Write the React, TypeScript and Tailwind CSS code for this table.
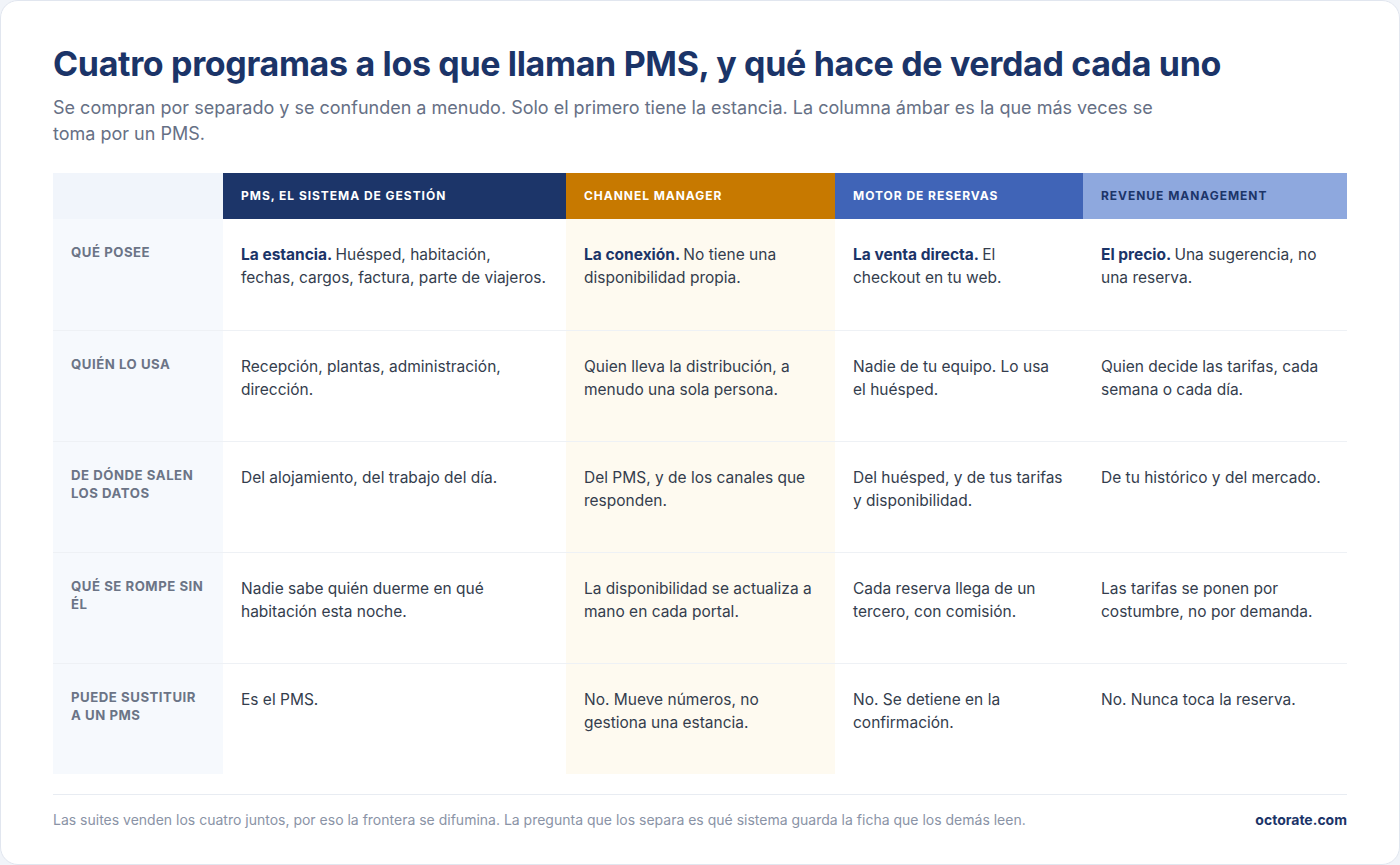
const columns = [
  { title: 'PMS, el sistema de gestión', head: 'bg-[#1c3569] text-white', body: 'bg-white' },
  { title: 'Channel manager', head: 'bg-[#c77900] text-white', body: 'bg-[#fefaf0]' },
  { title: 'Motor de reservas', head: 'bg-[#4064b7] text-white', body: 'bg-white' },
  { title: 'Revenue management', head: 'bg-[#8ea8de] text-[#1c3569]', body: 'bg-white' },
];

type Cell = { lead?: string; text: string };

const rows: { label: string; cells: Cell[] }[] = [
  {
    label: 'Qué posee',
    cells: [
      { lead: 'La estancia.', text: 'Huésped, habitación, fechas, cargos, factura, parte de viajeros.' },
      { lead: 'La conexión.', text: 'No tiene una disponibilidad propia.' },
      { lead: 'La venta directa.', text: 'El checkout en tu web.' },
      { lead: 'El precio.', text: 'Una sugerencia, no una reserva.' },
    ],
  },
  {
    label: 'Quién lo usa',
    cells: [
      { text: 'Recepción, plantas, administración, dirección.' },
      { text: 'Quien lleva la distribución, a menudo una sola persona.' },
      { text: 'Nadie de tu equipo. Lo usa el huésped.' },
      { text: 'Quien decide las tarifas, cada semana o cada día.' },
    ],
  },
  {
    label: 'De dónde salen los datos',
    cells: [
      { text: 'Del alojamiento, del trabajo del día.' },
      { text: 'Del PMS, y de los canales que responden.' },
      { text: 'Del huésped, y de tus tarifas y disponibilidad.' },
      { text: 'De tu histórico y del mercado.' },
    ],
  },
  {
    label: 'Qué se rompe sin él',
    cells: [
      { text: 'Nadie sabe quién duerme en qué habitación esta noche.' },
      { text: 'La disponibilidad se actualiza a mano en cada portal.' },
      { text: 'Cada reserva llega de un tercero, con comisión.' },
      { text: 'Las tarifas se ponen por costumbre, no por demanda.' },
    ],
  },
  {
    label: 'Puede sustituir a un PMS',
    cells: [
      { text: 'Es el PMS.' },
      { text: 'No. Mueve números, no gestiona una estancia.' },
      { text: 'No. Se detiene en la confirmación.' },
      { text: 'No. Nunca toca la reserva.' },
    ],
  },
];

export default function App() {
  return (
    <div className="bg-[#f1f4f9] font-['Inter','Noto_Sans',sans-serif]">
      <div className="h-[865px] w-[1400px] rounded-[18px] border border-[#e1e6ef] bg-white px-[52px] pt-[42px]">
        <h1 className="text-[34px] font-bold leading-[41px] tracking-[-0.01em] text-[#1b3468]">
          Cuatro programas a los que llaman PMS, y qué hace de verdad cada uno
        </h1>
        <p className="mt-[11px] max-w-[1130px] text-[18px] leading-[26px] text-[#667085]">
          Se compran por separado y se confunden a menudo. Solo el primero tiene la estancia. La columna ámbar es la que más veces se toma por un PMS.
        </p>

        <div className="mt-[26px] grid w-[1294px] grid-cols-[170px_343px_269px_248px_264px]">
          <div className="h-[46px] bg-[#f1f5fb]" />
          {columns.map((c) => (
            <div
              key={c.title}
              className={`flex h-[46px] items-center px-[18px] text-[12px] font-bold uppercase tracking-[0.08em] ${c.head}`}
            >
              {c.title}
            </div>
          ))}

          {rows.map((r, ri) => (
            <div key={r.label} className="contents">
              <div
                className={`h-[111px] bg-[#f6f9fd] px-[18px] pt-[24px] text-[13.2px] font-bold uppercase leading-[18px] tracking-[0.04em] text-[#6b7486] ${
                  ri > 0 ? 'border-t border-[#eef1f5]' : ''
                }`}
              >
                {r.label}
              </div>
              {r.cells.map((cell, ci) => (
                <div
                  key={ci}
                  className={`h-[111px] px-[18px] pt-[24px] text-[15.5px] leading-[23px] text-[#343d4d] ${columns[ci].body} ${
                    ri > 0 ? 'border-t border-[#eef1f5]' : ''
                  }`}
                >
                  {cell.lead && <span className="font-bold text-[#1b3468]">{cell.lead} </span>}
                  {cell.text}
                </div>
              ))}
            </div>
          ))}
        </div>

        <div className="mt-[20px] flex w-[1294px] items-center justify-between border-t border-[#e8ecf2] pt-[15px]">
          <p className="text-[14px] leading-[20px] text-[#8a93a6]">
            Las suites venden los cuatro juntos, por eso la frontera se difumina. La pregunta que los separa es qué sistema guarda la ficha que los demás leen.
          </p>
          <span className="text-[14px] font-bold leading-[20px] text-[#1b3468]">octorate.com</span>
        </div>
      </div>
    </div>
  );
}
